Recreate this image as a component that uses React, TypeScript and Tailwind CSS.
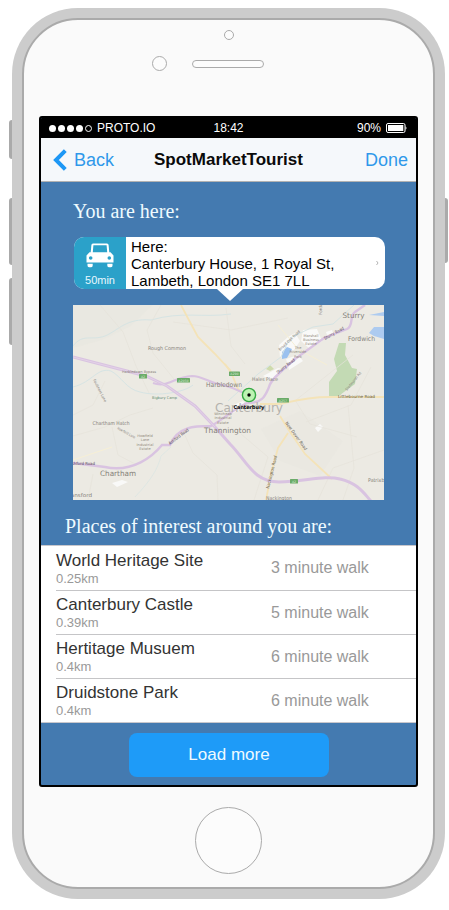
import React from 'react';

const SANS = "font-['Liberation_Sans',Arial,sans-serif]";
const SERIF = "font-['Liberation_Serif','Times_New_Roman',serif]";

const places = [
  { name: 'World Heritage Site', distance: '0.25km', walk: '3 minute walk' },
  { name: 'Canterbury Castle', distance: '0.39km', walk: '5 minute walk' },
  { name: 'Hertitage Musuem', distance: '0.4km', walk: '6 minute walk' },
  { name: 'Druidstone Park', distance: '0.4km', walk: '6 minute walk' },
];

function StatusBar() {
  return (
    <div className="grid h-5 grid-cols-3 items-center bg-black pr-[9px] pl-2 text-[12px] leading-5 text-white">
      <div className="flex items-center">
        <div className="mr-[5px] flex gap-[2px]">
          <span className="h-[7px] w-[7px] rounded-full bg-white" />
          <span className="h-[7px] w-[7px] rounded-full bg-white" />
          <span className="h-[7px] w-[7px] rounded-full bg-white" />
          <span className="h-[7px] w-[7px] rounded-full bg-white" />
          <span className="h-[7px] w-[7px] rounded-full border border-white" />
        </div>
        <span>PROTO.IO</span>
      </div>
      <div className="pl-px text-center">18:42</div>
      <div className="flex items-center justify-end">
        <span className="mr-[5px]">90%</span>
        <svg width="21" height="10" viewBox="0 0 21 10">
          <rect x="0.5" y="0.5" width="18.5" height="9" rx="1.5" fill="none" stroke="#fff" />
          <rect x="2" y="2" width="15.3" height="6" fill="#fff" />
          <path d="M19.5 3.2c1.3.6 1.3 3 0 3.6z" fill="#fff" />
        </svg>
      </div>
    </div>
  );
}

function NavBar() {
  return (
    <div className="flex h-11 items-center border-b border-[#b2b2b2] bg-[#f5f8fb] pr-[8px] pl-3">
      <div className="flex w-[101px] items-center text-[18px] text-[#2f98ea]">
        <svg width="14" height="22" viewBox="0 0 14 22" className="mr-[7px]">
          <path d="M12.3 1.7L3 11l9.3 9.3" fill="none" stroke="#1d97f5" strokeWidth="4" />
        </svg>
        <span className="pt-px">Back</span>
      </div>
      <h1 className="flex-1 text-[17px] font-bold whitespace-nowrap text-[#0a0a0a]">SpotMarketTourist</h1>
      <span className="pt-px text-[18px] text-[#2f98ea]">Done</span>
    </div>
  );
}

function CarIcon() {
  return (
    <svg width="28" height="26" viewBox="0 0 28 26" fill="#fff">
      <path
        fillRule="evenodd"
        d="M7 1.500H21Q22.500 1.500 22.600 3L23.300 10.200H24.500L27.500 13.500V20.500H.5V13.500L3.500 10.200H4.700L5.400 3Q5.500 1.500 7 1.500ZM7.400 3.300L6.800 10.200H21.200L20.600 3.300ZM4.700 14.200a1.800 1.800 0 1 0 0 3.600 1.800 1.800 0 0 0 0-3.600ZM23.300 14.200a1.800 1.800 0 1 0 0 3.600 1.800 1.800 0 0 0 0-3.600Z"
      />
      <path d="M1.500 21.800h5.200v1.700q0 1.700-1.500 1.700H3q-1.500 0-1.500-1.700ZM21.300 21.800h5.200v1.700q0 1.700-1.500 1.700h-2.200q-1.500 0-1.500-1.700Z" />
    </svg>
  );
}

function LocationCard() {
  return (
    <div className="mt-[13px] ml-[33px] w-[311px]">
      <div className="flex h-[52px] overflow-hidden rounded-[10px] bg-white">
        <div className="flex w-[52px] flex-col items-center bg-[#2ba1c9] pt-[5px] text-[11px] leading-[13px] text-[#e8f8ff]">
          <CarIcon />
          <span className="mt-[6px]">50min</span>
        </div>
        <p className="flex-1 pt-px pl-[5px] text-[15px] leading-[17px] whitespace-nowrap text-black">
          Here:
          <br />
          Canterbury House, 1 Royal St,
          <br />
          Lambeth, London SE1 7LL
        </p>
        <svg width="5" height="8" viewBox="0 0 5 8" className="mr-[5px] self-center">
          <path d="M1.500 2l1.500 2-1.500 2" fill="none" stroke="#b5b5b5" strokeWidth="1" />
        </svg>
      </div>
      <svg width="26" height="12" viewBox="0 0 26 12" className="ml-[143px] block">
        <path d="M0 0h26L13 12z" fill="#fff" />
      </svg>
    </div>
  );
}

type LabelProps = {
  x: number;
  y: number;
  w: number;
  size: number;
  rotate?: number;
  fill?: string;
  children: string;
};

// A map label, fitted to the given width and turned round its own start point.
function Label({ x, y, w, size, rotate = 0, fill = '#85817a', children }: LabelProps) {
  return (
    <text
      transform={`translate(${x} ${y}) rotate(${rotate})`}
      fontSize={size}
      textLength={w}
      lengthAdjust="spacingAndGlyphs"
      fill={fill}
    >
      {children}
    </text>
  );
}

function Shield({ x, y, w, label }: { x: number; y: number; w: number; label: string }) {
  return (
    <g>
      <rect x={x} y={y} width={w} height="4.600" rx="0.600" fill="#6bab69" />
      <text x={x + w / 2} y={y + 3.500} fontSize="3.200" textAnchor="middle" fill="#d3e8ca">
        {label}
      </text>
    </g>
  );
}

function CanterburyMap() {
  return (
    <svg
      width="311"
      height="195"
      viewBox="0 0 311 195"
      className="mt-1 ml-8 block font-['DejaVu_Sans','Noto_Sans',sans-serif]"
      fill="none"
    >
      <rect width="311" height="195" fill="#eceae3" />
      <g fill="#e4e6dd">
        <path d="M0 0h80l-22 21-29 14L0 43z" opacity=".35" />
        <path d="M188 124l39-18 43 30-23 35-40-15z" opacity=".3" />
      </g>
      <g fill="#f9f9f8">
        <path d="M230 25l14-1 5 12-12 8-9-8zM206 40l9-8 7-4 5 8-6 9-14 8zM213 54l12-4 5 6-14 9zM190 71l15-8 5 1-11 11zM158 101l12-5 4 5-14 7zM242 123l5-4 3 3-5 5zM39 178l10-3 6 2-11 5zM253 27l6-2 1 3-6 2z" />
      </g>
      <path d="M266 38l7 0-1 12 7 13 5 1-2 15-11 8-8 6H256V77l8-11-3-12z" fill="#c3dab4" />
      <path d="M193 64l4-4 4 4-4 2z" fill="#cedbac" />
      <path d="M296 28l5-6 10 0v12l-10-3zM296 10l15-3v4z" fill="#adcbf0" />
      <path d="M209 47l5-5 5 2-5 9-5 1z" fill="#9bc1ef" />
      <g stroke="#d6e4e3" strokeWidth="1">
        <path d="M0 41C10 28 18 36 32 31 46 25 53 13 78 15 109 6 130 13 158 9M0 82C20 77 24 62 38 66 49 72 53 84 67 87 85 92 112 87 120 80" />
        <path d="M155 96L185 69 208 52 217 33 240 22 260 19 281 0" />
        <path d="M62 192C79 174 85 163 88 151L98 142" opacity=".6" />
      </g>
      <g stroke="#e5e2da" strokeWidth="0.700">
        <path d="M0 131L32 122 57 110 80 103M27 0L50 27 63 61 76 88M88 0L74 25 80 48 105 79M110 126L120 148 144 170 145 195M20 169L15 195M39 122L45 150 64 160M168 129L195 152 181 195M245 195L260 163 311 145M233 117L278 100 298 62M153 3L158 41 172 59M100 17L158 25 215 13M0 110L20 100 32 76M222 95L237 119 284 132M270 195L281 163 275 100M280 50L257 68 223 95" />
      </g>
      <g stroke="#f4e3b8" strokeWidth="1.800">
        <path d="M108 0L118 19 125 32 141 48 157 65 165 84 175 92M311 92L257 92C231 92 217 97 208 99L187 99" />
        <path d="M207 111L215 124 232 149 259 174M215 128L205 143 198 169 193 195M152 59L159 69" />
      </g>
      <g stroke="#f6efd5" strokeWidth="1">
        <path d="M205 20L225 44 254 60M0 155L39 142" />
      </g>
      <g stroke="#d9c3e1" strokeWidth="3">
        <path d="M0 52L27 59 73 71 94 81 122 101 142 122 157 139C174 156 180 177 206 177 234 176 252 170 267 174 284 178 290 187 297 195L300 199" />
        <path d="M80 78C95 83 100 72 119 71 130 71 138 79 150 80 158 82 165 85 171 88" strokeWidth="2.200" />
        <path d="M0 158L32 162C60 168 80 151 89 140L97 140C105 121 122 121 138 121 151 114 159 105 174 98 190 98 192 91 196 82 198 73 213 63 222 54L251 33 274 24C281 21 276 11 282 7L292 0" strokeWidth="2.400" />
      </g>
      <path d="M0 52L27 59 73 71 94 81 122 101 142 122" stroke="#e6d9ea" strokeWidth="0.700" />
      <Label x={75} y={45} w={38} size={5.2}>Rough Common</Label>
      <Label x={133} y={82} w={36} size={6.6}>Harbledown</Label>
      <Label x={179} y={76} w={26} size={5}>Hales Place</Label>
      <Label x={275} y={35.5} w={27} size={6.6}>Fordwich</Label>
      <Label x={269.5} y={13} w={22} size={7.4}>Sturry</Label>
      <Label x={19.500} y={120} w={37} size={5.2}>Chartham Hatch</Label>
      <Label x={27} y={170.5} w={36} size={7.4}>Chartham</Label>
      <Label x={131} y={128} w={47} size={7.4}>Thannington</Label>
      <Label x={-7} y={192} w={26} size={5.2}>Mansford</Label>
      <Label x={193} y={195} w={26} size={5.2}>Nackington</Label>
      <Label x={295} y={177} w={30} size={5.2}>Patrixbourne</Label>
      <Label x={142} y={106.5} w={68} size={13} fill="#b4b2ad">Canterbury</Label>
      <Label x={49} y={67.5} w={34} size={3.6}>Harbledown Bypass</Label>
      <Label x={79} y={94} w={25} size={3.8} fill="#5f8a70">Bigbury Camp</Label>
      <Label x={20} y={75} w={25} size={3.8} rotate={63}>Faulkners Lane</Label>
      <Label x={44} y={124} w={20} size={3.6} rotate={29}>Howfield Lane</Label>
      <Label x={97} y={140} w={24} size={4.4} rotate={-37} fill="#54475a">Ashford Road</Label>
      <Label x={-4} y={160} w={26} size={4.2} fill="#54475a">Ashford Road</Label>
      <Label x={207} y={46} w={28} size={3.8} rotate={-43}>Broad Oak Road</Label>
      <Label x={205} y={69} w={22} size={4.4} rotate={-38} fill="#5c4a60">Sturry Road</Label>
      <Label x={252} y={35} w={22} size={4.4} rotate={-29} fill="#5c4a60">Sturry Road</Label>
      <Label x={249} y={10} w={18} size={4.2} rotate={-90}>Fordwich</Label>
      <Label x={274} y={86} w={23} size={3.6} rotate={-51}>Stodmarsh Rd</Label>
      <Label x={265} y={93} w={37} size={4.2} fill="#61583f">Littlebourne Road</Label>
      <Label x={212} y={118} w={34} size={4.4} rotate={54} fill="#6e6653">New Dover Road</Label>
      <Label x={196} y={184} w={34} size={4.4} rotate={-76} fill="#6e6653">Nackington Road</Label>
      <g fill="#928a7e" fontSize="3.600" textAnchor="middle">
        <text x="72" y="132">Howfield</text>
        <text x="72" y="136.300">Lane</text>
        <text x="72" y="140.600">Industrial</text>
        <text x="72" y="144.900">Estate</text>
        <text x="150" y="110">Wincheap</text>
        <text x="150" y="114.300">Industrial</text>
        <text x="150" y="118.600">Estate</text>
        <text x="238" y="31.500">Marshall</text>
        <text x="238" y="35.800">Business</text>
        <text x="238" y="40.100">Estate</text>
        <text x="225" y="44">The</text>
        <text x="225" y="48.300">Riverside</text>
        <text x="225" y="52.600">Park</text>
      </g>
      <Shield x={66} y={69} w={8} label="A2" />
      <Shield x={104} y={73} w={13} label="A2050" />
      <Shield x={156} y={66.500} w={11} label="A290" />
      <Shield x={204} y={93} w={12} label="A257" />
      <Shield x={217} y={174} w={8} label="A2" />
      <circle cx="176" cy="90" r="6.600" fill="#bcf3b1" stroke="#35a943" strokeWidth="1.400" />
      <circle cx="176" cy="90" r="1.700" fill="#000" />
      <text
        x="160.500"
        y="104"
        fontSize="5.200"
        fontWeight="700"
        fill="#000"
        textLength="31"
        lengthAdjust="spacingAndGlyphs"
      >
        Canterbury
      </text>
    </svg>
  );
}

function PlaceList() {
  return (
    <ul className="mt-[6px] border-t border-[#c8c7cc] bg-white pt-px">
      {places.map((place, i) => (
        <li key={place.name} className="flex h-11 items-center last:border-b last:border-[#c8c7cc]">
          <div
            className={`ml-[15px] flex h-11 flex-1 items-center ${i < places.length - 1 ? 'border-b border-[#c5c5c7]' : ''}`}
          >
            <div className="w-[215px]">
              <div className="text-[17px] leading-5 text-[#333]">{place.name}</div>
              <div className="text-[13px] leading-4 text-[#999]">{place.distance}</div>
            </div>
            <div className={`text-[16px] text-[#999] ${i === 0 ? 'pb-px' : 'pt-px'}`}>{place.walk}</div>
          </div>
        </li>
      ))}
    </ul>
  );
}

function Screen() {
  return (
    <div className="mx-auto mt-[45px] h-[671px] w-[379px] overflow-hidden rounded-[3px] border-2 border-black bg-[#447ab0]">
      <StatusBar />
      <NavBar />
      <h2 className={`mt-[17px] ml-8 text-[20px] leading-[25px] text-[#effbff] ${SERIF}`}>You are here:</h2>
      <LocationCard />
      <CanterburyMap />
      <h2 className={`mt-[14px] ml-6 text-[20px] leading-[25px] text-[#effbff] ${SERIF}`}>
        Places of interest around you are:
      </h2>
      <PlaceList />
      <button className="mt-[10px] ml-[88px] block h-11 w-[200px] rounded-lg bg-[#1e9bf8] text-[17px] text-[#effaff]">
        Load more
      </button>
    </div>
  );
}

export default function App() {
  return (
    <div className={`flex h-[910px] w-[449px] overflow-hidden bg-white pt-2 ${SANS}`}>
      <div className="flex w-3 flex-col items-end pt-28">
        <span className="h-[39px] w-[3px] rounded-l-[3px] bg-[#aaa]" />
        <span className="mt-[39px] h-[67px] w-[3px] rounded-l-[3px] bg-[#aaa]" />
        <span className="mt-[13px] h-[67px] w-[3px] rounded-l-[3px] bg-[#aaa]" />
      </div>
      <div className="h-[891px] w-[433px] rounded-[66px] bg-[#ccc] p-[10px]">
        <div className="h-[871px] rounded-[56px] border-2 border-[#aaa] bg-[#fafafa]">
          <div className="mx-auto mt-[10px] h-[10px] w-[10px] rounded-full border border-[#aaa] bg-[#fcfcfc]" />
          <div className="mt-4 ml-32 flex h-[15px] items-center">
            <div className="h-[15px] w-[15px] rounded-full border border-[#aaa] bg-[#fcfcfc]" />
            <div className="ml-[25px] h-2 w-[72px] rounded-full border border-[#aaa] bg-[#fcfcfc]" />
          </div>
          <Screen />
          <div className="mx-auto mt-5 h-[67px] w-[67px] rounded-full border border-[#aaa] bg-[#fcfcfc]" />
        </div>
      </div>
      <div className="w-1 pt-[190px]">
        <div className="h-[65px] w-[3px] rounded-r-[3px] bg-[#aaa]" />
      </div>
    </div>
  );
}
